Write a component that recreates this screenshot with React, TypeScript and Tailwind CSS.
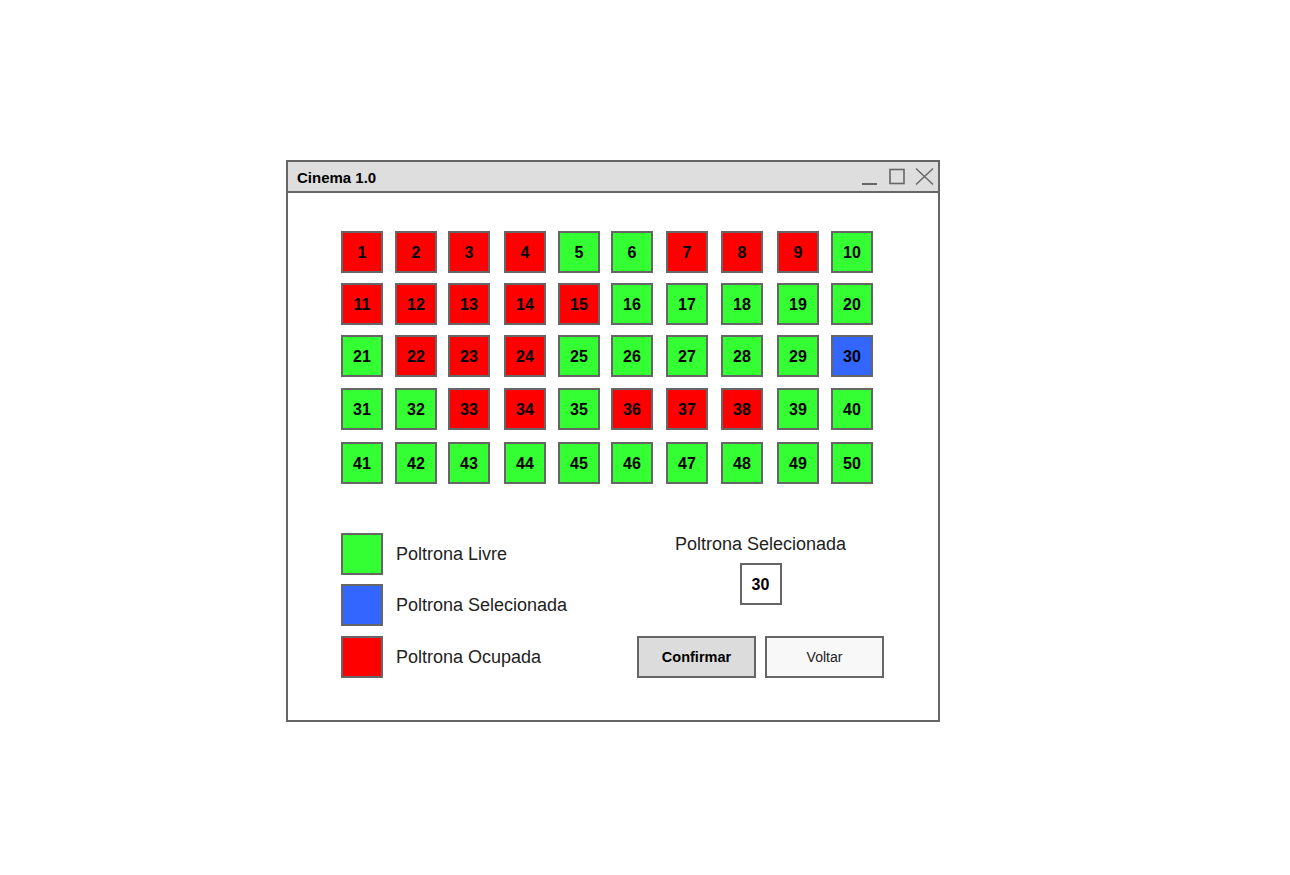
import React from 'react'

type Status = 'free' | 'taken' | 'selected'

const seatStatus: Record<number, Status> = {}
const taken = [1, 2, 3, 4, 7, 8, 9, 11, 12, 13, 14, 15, 22, 23, 24, 33, 34, 36, 37, 38]
for (let i = 1; i <= 50; i++) seatStatus[i] = 'free'
taken.forEach((n) => (seatStatus[n] = 'taken'))
seatStatus[30] = 'selected'

const colors: Record<Status, string> = {
  free: 'bg-[#33ff33]',
  taken: 'bg-[#ff0000]',
  selected: 'bg-[#3366ff]',
}

function Seat({ n }: { n: number }) {
  return (
    <div
      className={`w-[42px] h-[42px] border-2 border-[#666666] flex items-center justify-center pt-[1px] text-[16px] font-bold text-black ${colors[seatStatus[n]]}`}
    >
      {n}
    </div>
  )
}

function WindowControls() {
  return (
    <svg width="76" height="29" viewBox="0 0 76 29" fill="none" stroke="#666666">
      <line x1="2" y1="22" x2="17" y2="22" strokeWidth="2" />
      <rect x="30" y="7.5" width="14" height="14" strokeWidth="1.6" />
      <line x1="56" y1="6.5" x2="73" y2="22.5" strokeWidth="1.5" />
      <line x1="73" y1="6.5" x2="56" y2="22.5" strokeWidth="1.5" />
    </svg>
  )
}

function LegendItem({ color, label, className = '' }: { color: string; label: string; className?: string }) {
  return (
    <div className={`flex items-center gap-[13px] ${className}`}>
      <div className={`w-[42px] h-[42px] border-2 border-[#666666] ${color}`} />
      <span className="text-[18px] text-[#222222]">{label}</span>
    </div>
  )
}

export default function App() {
  const rows = [0, 1, 2, 3, 4]

  return (
    <div className="min-h-screen bg-white pl-[286px] pt-[160px] font-['Liberation_Sans',Arial,sans-serif]">
      <div className="w-[654px] h-[562px] border-2 border-[#666666] bg-white flex flex-col">
        {/* Title bar */}
        <div className="h-[31px] bg-[#dedede] border-b-2 border-[#666666] flex items-center justify-between pl-[9px] pr-[2px]">
          <span className="text-[15px] font-bold text-black pt-[3px]">Cinema 1.0</span>
          <WindowControls />
        </div>

        {/* Seats */}
        <div className="pl-[53px] pt-[38px]">
          <div className="grid grid-cols-[54px_53px_56px_54px_53px_55px_55px_56px_54px_42px] grid-rows-[52px_52px_53px_54px_42px]">
            {rows.map((r) =>
              Array.from({ length: 10 }, (_, c) => <Seat key={r * 10 + c + 1} n={r * 10 + c + 1} />)
            )}
          </div>

          {/* Bottom section */}
          <div className="flex mt-[49px]">
            <div className="w-[296px] flex flex-col">
              <LegendItem color="bg-[#33ff33]" label="Poltrona Livre" />
              <LegendItem color="bg-[#3366ff]" label="Poltrona Selecionada" className="mt-[9px]" />
              <LegendItem color="bg-[#ff0000]" label="Poltrona Ocupada" className="mt-[10px]" />
            </div>
            <div className="w-[247px] flex flex-col items-center">
              <span className="text-[18px] leading-[20px] text-[#222222] mt-[1px]">Poltrona Selecionada</span>
              <div className="w-[42px] h-[42px] border-2 border-[#666666] bg-white flex items-center justify-center pt-[1px] text-[16px] font-bold text-black mt-[9px]">
                30
              </div>
              <div className="flex gap-[9px] mt-[31px]">
                <button className="w-[119px] h-[42px] border-2 border-[#666666] bg-[#dcdcdc] text-[14.5px] font-bold text-black pt-[1px]">
                  Confirmar
                </button>
                <button className="w-[119px] h-[42px] border-2 border-[#666666] bg-[#f8f8f8] text-[14px] text-[#222222] pt-[1px]">
                  Voltar
                </button>
              </div>
            </div>
          </div>
        </div>
      </div>
    </div>
  )
}
